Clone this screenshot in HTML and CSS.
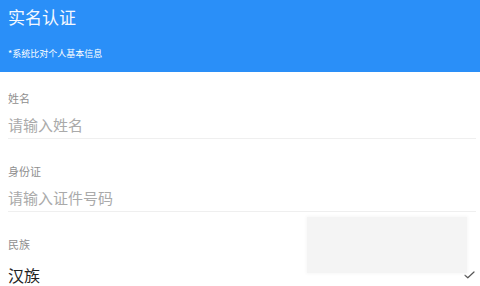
FILE: index.html
```html
<!DOCTYPE html>
<html lang="zh-CN">
<head>
<meta charset="utf-8">
<title>实名认证</title>
<link rel="stylesheet" href="styles.css">
</head>
<body>
<div class="page">
  <header class="header">
    <h1 class="title">实名认证</h1>
    <p class="subtitle">*系统比对个人基本信息</p>
  </header>
  <main class="form">
    <div class="field">
      <div class="label">姓名</div>
      <div class="input placeholder">请输入姓名</div>
    </div>
    <div class="field">
      <div class="label">身份证</div>
      <div class="input placeholder">请输入证件号码</div>
    </div>
    <div class="field">
      <div class="label">民族</div>
      <div class="input select">
        <span class="value">汉族</span>
        <svg class="check" width="11" height="8" viewBox="0 0 11 8"><path d="M1 4.2 L3.8 6.8 L10 1" fill="none" stroke="#555" stroke-width="1.2" stroke-linecap="round" stroke-linejoin="round"/></svg>
      </div>
    </div>
  </main>
  <div class="blur-box"></div>
</div>
</body>
</html>
```
FILE: styles.css
```css
* { box-sizing: border-box; }
html, body { margin: 0; padding: 0; background: #fff; }
body {
  font-family: "Noto Sans CJK SC", "Noto Sans", sans-serif;
  width: 480px;
  height: 286px;
  overflow: hidden;
}
.page { position: relative; width: 480px; height: 286px; }
.header {
  height: 72px;
  background: #2a8ff8;
  padding: 5px 8px 0 8px;
  color: #fff;
}
.title {
  margin: 0;
  font-size: 17px;
  font-weight: 400;
  line-height: 24px;
  color: #f4f8ff;
}
.subtitle {
  margin: 18px 0 0 0;
  font-size: 9px;
  line-height: 14px;
  color: #fff;
}
.form { padding: 0 4px 0 8px; }
.field { padding-top: 24px; }
.field:first-child { padding-top: 18px; }
.label {
  font-size: 11px;
  line-height: 16px;
  color: #8f8f8f;
  margin-bottom: 5px;
}
.input {
  height: 28px;
  line-height: 28px;
  font-size: 15px;
  border-bottom: 1px solid #efefef;
}
.placeholder { color: #aaaaaa; }
.select {
  border-bottom: none;
  height: 30px;
  line-height: 30px;
  display: flex;
  align-items: flex-end;
  justify-content: space-between;
  padding-right: 1px;
}
.value { font-size: 16px; color: #222; line-height: 24px; }
.check { margin-bottom: 8px; }
.blur-box {
  position: absolute;
  left: 307px;
  top: 217px;
  width: 160px;
  height: 56px;
  background: #f4f4f4;
  box-shadow: 0 0 3px 1px #f7f7f7;
}
```
